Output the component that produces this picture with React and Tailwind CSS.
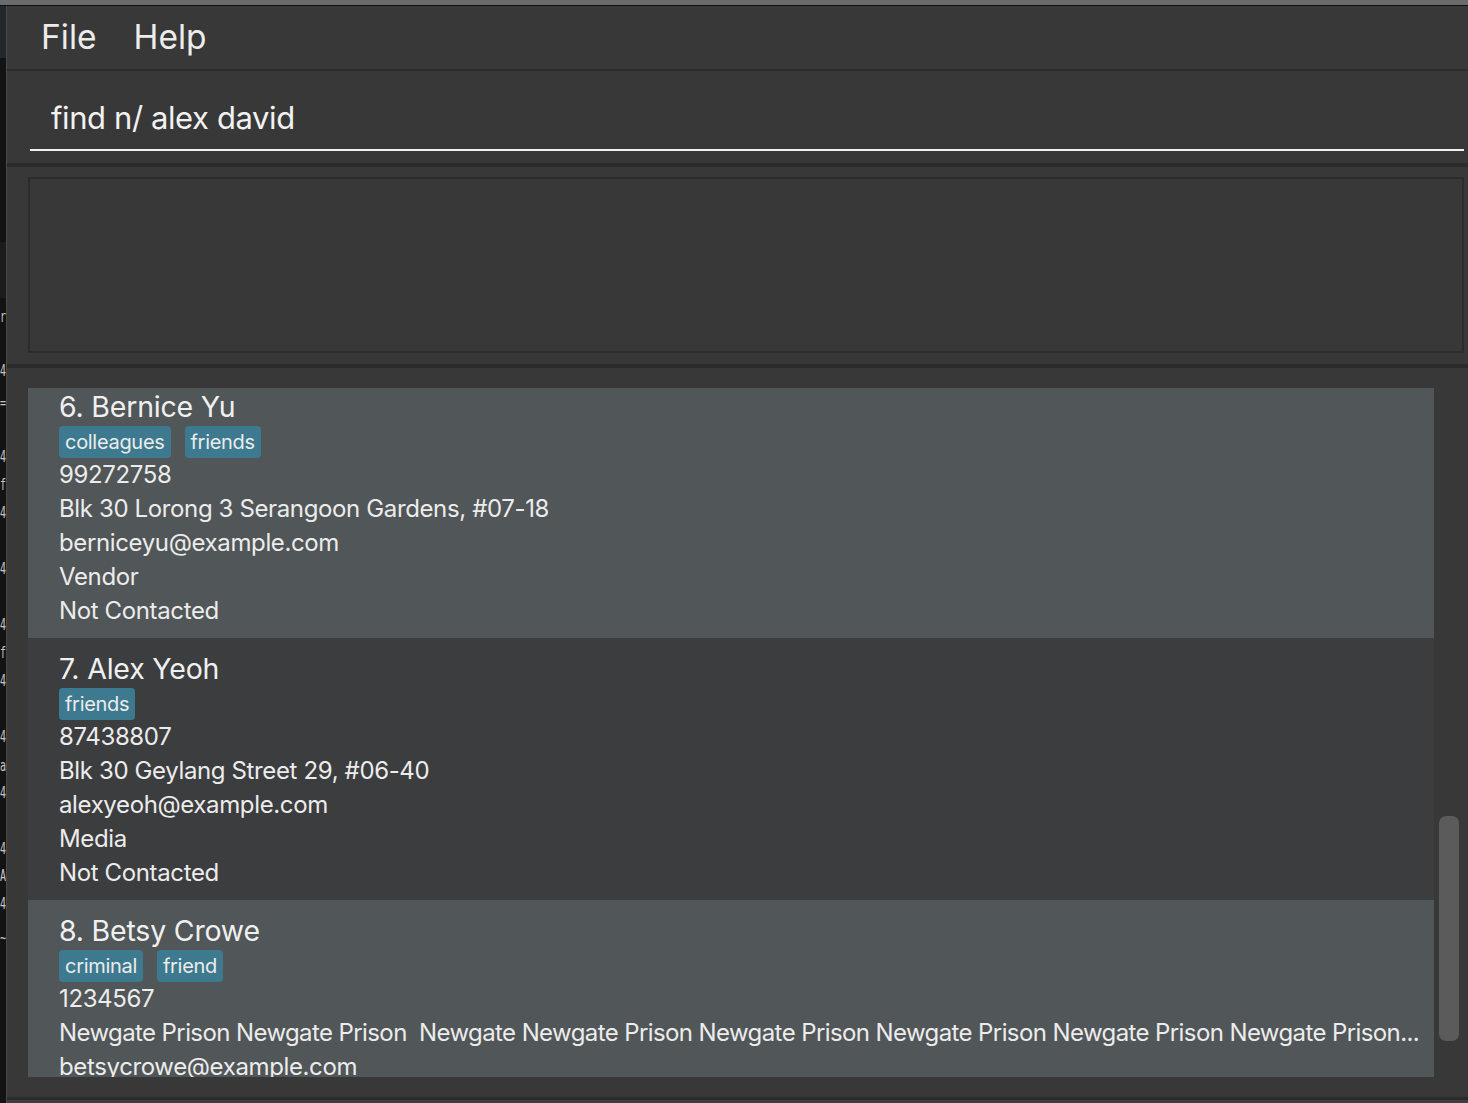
import React from 'react';

const persons = [
  {
    name: '6. Bernice Yu',
    tags: ['colleagues', 'friends'],
    lines: ['99272758', 'Blk 30 Lorong 3 Serangoon Gardens, #07-18', 'berniceyu@example.com', 'Vendor', 'Not Contacted'],
  },
  {
    name: '7. Alex Yeoh',
    tags: ['friends'],
    lines: ['87438807', 'Blk 30 Geylang Street 29, #06-40', 'alexyeoh@example.com', 'Media', 'Not Contacted'],
  },
  {
    name: '8. Betsy Crowe',
    tags: ['criminal', 'friend'],
    lines: [
      '1234567',
      'Newgate Prison Newgate Prison  Newgate Newgate Prison Newgate Prison Newgate Prison Newgate Prison Newgate Prison...',
      'betsycrowe@example.com',
      'Vendor',
      'Not Contacted',
    ],
    tight: 1,
  },
];

// bits of the window sitting behind this one
const behind = [
  ['r', 308], ['4', 362], ['=', 394], ['4', 448], ['f', 476], ['4', 504], ['4', 560], ['4', 616],
  ['f', 644], ['4', 672], ['4', 728], ['a', 757], ['4', 784], ['4', 840], ['A', 867], ['4', 895], ['~', 929],
];

const PersonCard = ({ person, index }) => (
  <div className={`pl-[31px] pr-[14px] pt-[12px] pb-[10px] ${index % 2 === 0 ? 'bg-[#515658]' : 'bg-[#3c3d3f]'}`}>
    <div className="text-[28.5px] leading-[38px] tracking-[-0.2px] text-[#f0f0f0]">{person.name}</div>
    <div className="flex gap-[14px] h-[32px]">
      {person.tags.map(tag => (
        <span key={tag} className="px-[6px] rounded-[4px] bg-[#3e7a8f] text-[20px] leading-[32px] tracking-[-0.3px] text-[#ececec]">
          {tag}
        </span>
      ))}
    </div>
    {person.lines.map((line, i) => (
      <div
        key={i}
        className={`text-[24px] leading-[34px] text-[#ececec] whitespace-pre overflow-hidden text-ellipsis ${person.tight === i ? 'tracking-[-0.6px]' : 'tracking-[-0.37px]'}`}
      >
        {line}
      </div>
    ))}
  </div>
);

const App = () => {
  return (
    <div className="w-[1468px] h-[1103px] overflow-hidden flex flex-col bg-[#383838]" style={{ fontFamily: 'Inter, "Noto Sans", sans-serif' }}>
      <div className="h-[5px] bg-[#6b6b6b] shrink-0" />
      <div className="h-[1px] bg-[#111] shrink-0" />
      <div className="flex flex-1 min-h-0">
        {/* background window edge */}
        <div className="relative w-[6px] bg-[#131313] overflow-hidden shrink-0" style={{ fontFamily: '"DejaVu Sans Mono", monospace' }}>
          <div className="h-[52px] bg-[#23272b]" />
          <div className="h-[56px] mt-[184px] bg-[#1c1c1c]" />
          {behind.map(([ch, y], i) => (
            <span key={i} className="absolute left-0 text-[10px] leading-[12px] scale-y-[1.6] origin-top text-[#c8c8c8]" style={{ top: y - 6 }}>
              {ch}
            </span>
          ))}
        </div>
        <div className="w-[1px] bg-[#4a4a4a] shrink-0" />

        <div className="flex-1 flex flex-col min-w-0">
          {/* menu bar */}
          <div className="h-[63px] flex items-center gap-[37px] pl-[34px] text-[33.5px] text-[#ececec]">
            <span>File</span>
            <span>Help</span>
          </div>
          <div className="h-[2px] bg-[#2b2b2b]" />

          {/* command box */}
          <div className="h-[92px] pl-[23px] pr-[4px] flex flex-col">
            <div className="h-[80px] border-b-[2px] border-[#f2f2f2] flex items-center pl-[21px] pt-[16px] text-[31px] tracking-[-0.4px] text-[#f2f2f2]">
              find n/ alex david
            </div>
          </div>
          <div className="h-[4px] bg-[#2b2b2b]" />

          {/* result display */}
          <div className="h-[197px] pt-[10px] pl-[21px] pr-[4px]">
            <div className="h-[176px] border-[2px] border-[#2c2c2c] bg-[#383838]" />
          </div>
          <div className="h-[4px] bg-[#2b2b2b]" />

          {/* person list */}
          <div className="flex-1 min-h-0 flex pl-[21px] pr-[4px] py-[20px]">
            <div className="flex-1 min-w-0 overflow-hidden">
              <div className="-mt-[12px]">
                {persons.map((p, i) => (
                  <PersonCard key={p.name} person={p} index={i} />
                ))}
              </div>
            </div>
            <div className="w-[30px] shrink-0 flex justify-center">
              <div className="w-[20px] h-[225px] mt-[428px] rounded-[7px] bg-[#5b5b5b]" />
            </div>
          </div>
          <div className="h-[3px] bg-[#2b2b2b]" />
          <div className="h-[3px] bg-[#3d3d3d]" />
        </div>
      </div>
    </div>
  );
};

export default App;
